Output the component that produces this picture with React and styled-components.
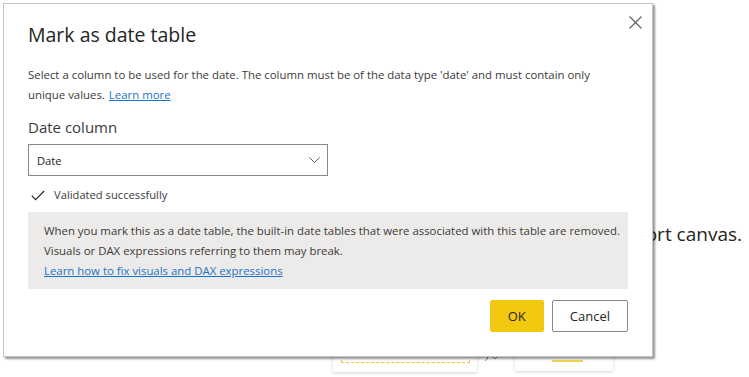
import React from 'react';
import styled, { createGlobalStyle } from 'styled-components';

const GlobalStyle = createGlobalStyle`
  html, body {
    margin: 0;
    padding: 0;
    background: #ffffff;
  }
  body {
    font-family: "Open Sans", "Noto Sans", sans-serif;
    color: #252423;
  }
`;

const Canvas = styled.div`
  position: relative;
  width: 749px;
  height: 377px;
  overflow: hidden;
  background: #ffffff;
`;

// report canvas items sitting behind the dialog
const CanvasText = styled.span`
  position: absolute;
  right: 7px;
  top: 222px;
  font-size: 19px;
  line-height: 24px;
  white-space: nowrap;
  color: #252423;
`;

const VisualCard = styled.div`
  position: absolute;
  left: ${p => p.left}px;
  top: ${p => p.top}px;
  width: ${p => p.width}px;
  height: ${p => p.height}px;
  background: #ffffff;
  box-shadow: 0 1px 3px rgba(0, 0, 0, 0.18);
`;

const DashedPlaceholder = styled.div`
  position: absolute;
  left: 8px;
  right: 7px;
  top: 0;
  bottom: 9px;
  border: 1px dashed #e6c93a;
`;

const YellowBar = styled.div`
  position: absolute;
  left: 37px;
  top: 30px;
  width: 31px;
  height: 2px;
  background: #f2d54a;
`;

const CanvasIcon = styled.svg`
  position: absolute;
  left: 484px;
  top: 354px;
`;

const Dialog = styled.div`
  position: absolute;
  left: 3px;
  top: 3px;
  width: 650px;
  box-sizing: border-box;
  background: #ffffff;
  border: 1px solid #c4c4c4;
  box-shadow: 2px 2px 2px rgba(0, 0, 0, 0.42);
  padding: 17px 24px 24px 24px;
  display: flex;
  flex-direction: column;
  z-index: 2;
`;

const CloseButton = styled.button`
  position: absolute;
  top: 7px;
  right: 6px;
  width: 22px;
  height: 22px;
  padding: 0;
  border: none;
  background: transparent;
  display: flex;
  align-items: center;
  justify-content: center;
  cursor: pointer;
`;

const Title = styled.h1`
  margin: 0;
  font-size: 19.5px;
  line-height: 28px;
  font-weight: 400;
  color: #252423;
`;

const Description = styled.p`
  margin: 16px 0 0 0;
  font-size: 11.4px;
  line-height: 20px;
  color: #3b3a39;
  white-space: nowrap;
`;

const Link = styled.a`
  color: #1a73c8;
  text-decoration: underline;
  cursor: pointer;
  margin-left: ${p => p.gap || 0}px;
`;

const FieldLabel = styled.label`
  display: block;
  margin-top: 11px;
  font-size: 15px;
  line-height: 22px;
  color: #3b3a39;
`;

const SelectBox = styled.div`
  margin-top: 6px;
  width: 300px;
  height: 32px;
  box-sizing: border-box;
  border: 1px solid #8a8886;
  display: flex;
  align-items: center;
  justify-content: space-between;
  padding: 0 7px 0 8px;
  font-size: 11.2px;
  color: #252423;
  cursor: pointer;
`;

const StatusRow = styled.div`
  margin-top: 9px;
  display: flex;
  align-items: center;
  gap: 9px;
  padding-left: 3px;
  font-size: 11.2px;
  line-height: 20px;
  color: #3b3a39;
`;

const Notice = styled.div`
  margin-top: 7px;
  background: #edebe9;
  padding: 9px 16px 8px 16px;
  font-size: 11.4px;
  line-height: 20px;
  color: #3b3a39;
`;

const NoticeLine = styled.div`
  white-space: nowrap;
`;

const Footer = styled.div`
  margin-top: 11px;
  display: flex;
  justify-content: flex-end;
  gap: 8px;
`;

const Button = styled.button`
  height: 32px;
  box-sizing: border-box;
  padding: 0 17px;
  font-family: "Open Sans", "Noto Sans", sans-serif;
  font-size: 13px;
  color: #252423;
  border-radius: 2px;
  cursor: pointer;
  background: ${p => (p.primary ? '#f2c811' : '#ffffff')};
  border: 1px solid ${p => (p.primary ? '#f2c811' : '#8a8886')};
`;

function CloseIcon() {
  return (
    <svg width="13" height="13" viewBox="0 0 13 13">
      <path d="M0.5 0.5 L12.5 12.5 M12.5 0.5 L0.5 12.5" stroke="#605e5c" strokeWidth="1.1" fill="none" />
    </svg>
  );
}

function ChevronDown() {
  return (
    <svg width="11" height="6" viewBox="0 0 11 6">
      <path d="M0.5 0.5 L5.5 5.5 L10.5 0.5" stroke="#605e5c" strokeWidth="1" fill="none" />
    </svg>
  );
}

function CheckIcon() {
  return (
    <svg width="14" height="11" viewBox="0 0 14 11">
      <path d="M0.8 5.8 L4.6 9.6 L13.2 1" stroke="#323130" strokeWidth="1.3" fill="none" />
    </svg>
  );
}

export default function App() {
  return (
    <>
      <GlobalStyle />
      <Canvas>
        <CanvasText>port canvas.</CanvasText>
        <VisualCard left={333} top={330} width={144} height={42}>
          <DashedPlaceholder />
        </VisualCard>
        <CanvasIcon width="18" height="8" viewBox="0 0 18 8">
          <path d="M1 1 L4 4 L1 7" stroke="#8a8886" strokeWidth="1" fill="none" />
          <path d="M8 2 L11 5 L14 2" stroke="#8a8886" strokeWidth="1" fill="none" />
        </CanvasIcon>
        <VisualCard left={515} top={330} width={98} height={41}>
          <YellowBar />
        </VisualCard>

        <Dialog role="dialog" aria-label="Mark as date table">
          <CloseButton aria-label="Close">
            <CloseIcon />
          </CloseButton>
          <Title>Mark as date table</Title>
          <Description>
            Select a column to be used for the date. The column must be of the data type 'date' and must contain only
            <br />
            unique values.
            <Link gap={4}>Learn more</Link>
          </Description>
          <FieldLabel>Date column</FieldLabel>
          <SelectBox>
            <span>Date</span>
            <ChevronDown />
          </SelectBox>
          <StatusRow>
            <CheckIcon />
            <span>Validated successfully</span>
          </StatusRow>
          <Notice>
            <NoticeLine>
              When you mark this as a date table, the built-in date tables that were associated with this table are removed.
            </NoticeLine>
            <NoticeLine>Visuals or DAX expressions referring to them may break.</NoticeLine>
            <NoticeLine>
              <Link>Learn how to fix visuals and DAX expressions</Link>
            </NoticeLine>
          </Notice>
          <Footer>
            <Button primary>OK</Button>
            <Button>Cancel</Button>
          </Footer>
        </Dialog>
      </Canvas>
    </>
  );
}
